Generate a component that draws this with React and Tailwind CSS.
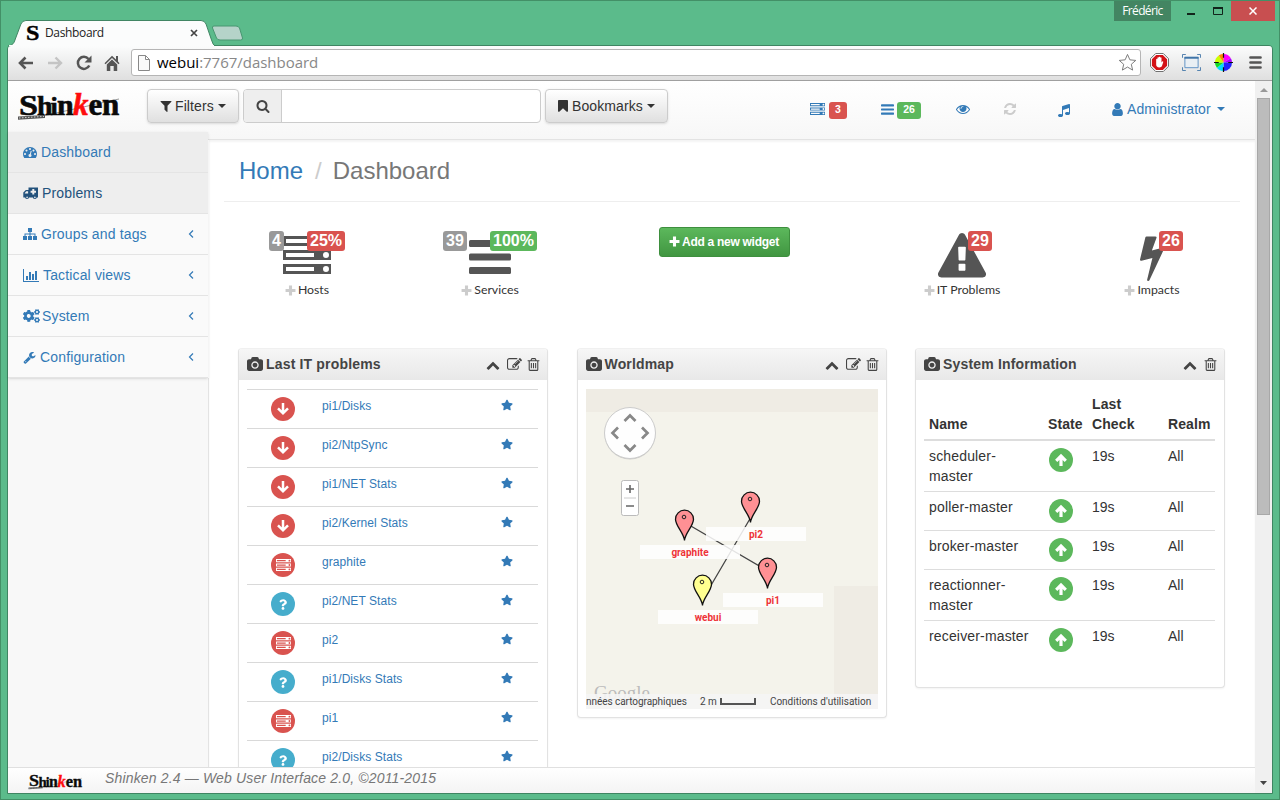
import React from "react";
import { FaCogs, FaQuestion, FaStar } from "react-icons/fa";

function Svg({ box = "0 0 1792 1792", className, children }) {
  return (
    <svg viewBox={box} fill="currentColor" className={"shrink-0 " + className}>
      {children}
    </svg>
  );
}

const paths = {
  filter: "M1595 295q17 41-14 70l-493 493v742q0 42-39 59-13 5-25 5-27 0-45-19l-256-256q-19-19-19-45v-486l-493-493q-31-29-14-70 17-39 59-39h1280q42 0 59 39z",
  search: "M1216 832q0-185-131.5-316.5t-316.5-131.5-316.5 131.5-131.5 316.5 131.5 316.5 316.5 131.5 316.5-131.5 131.5-316.5zm512 832q0 52-38 90t-90 38q-54 0-90-38l-343-342q-179 124-399 124-143 0-273.5-55.5t-225-150-150-225-55.5-273.5 55.5-273.5 150-225 225-150 273.5-55.5 273.5 55.5 225 150 150 225 55.5 273.5q0 220-124 399l343 343q37 37 37 90z",
  bookmark: "M1420 128q23 0 44 9 33 13 52.5 41t19.5 62v1289q0 34-19.5 62t-52.5 41q-19 8-44 8-48 0-83-32l-441-424-441 424q-36 33-83 33-23 0-44-9-33-13-52.5-41t-19.5-62v-1289q0-34 19.5-62t52.5-41q21-9 44-9h1048z",
  eye: "M1664 960q-152-236-381-353 61 104 61 225 0 185-131.5 316.5t-316.5 131.5-316.5-131.5-131.5-316.5q0-121 61-225-229 117-381 353 133 205 333.5 326.5t434.5 121.5 434.5-121.5 333.5-326.5zm-720-384q0-20-14-34t-34-14q-125 0-214.5 89.5t-89.5 214.5q0 20 14 34t34 14 34-14 14-34q0-86 61-147t147-61q20 0 34-14t14-34zm848 384q0 34-20 69-140 230-376.5 368.5t-499.5 138.5-499.5-139-376.5-368q-20-35-20-69t20-69q140-229 376.5-368t499.5-139 499.5 139 376.5 368q20 35 20 69z",
  refresh: "M1639 1056q0 5-1 7-64 268-268 434.5t-478 166.5q-146 0-282.5-55t-243.5-157l-129 129q-19 19-45 19t-45-19-19-45v-448q0-26 19-45t45-19h448q26 0 45 19t19 45-19 45l-137 137q71 66 161 102t187 36q134 0 250-65t186-179q11-17 53-117 8-23 30-23h192q13 0 22.5 9.5t9.5 22.5zm25-800v448q0 26-19 45t-45 19h-448q-26 0-45-19t-19-45 19-45l138-138q-148-137-349-137-134 0-250 65t-186 179q-11 17-53 117-8 23-30 23h-199q-13 0-22.5-9.5t-9.5-22.5v-7q65-268 270-434.5t480-166.5q146 0 284 55.5t245 156.5l130-129q19-19 45-19t45 19 19 45z",
  music: "M1664 224v1120q0 50-34 89t-86 60.5-103.5 32-96.5 10.5-96.5-10.5-103.5-32-86-60.5-34-89 34-89 86-60.5 103.5-32 96.5-10.5q105 0 192 39v-537l-768 237v709q0 50-34 89t-86 60.5-103.5 32-96.5 10.5-96.5-10.5-103.5-32-86-60.5-34-89 34-89 86-60.5 103.5-32 96.5-10.5q105 0 192 39v-967q0-31 19-56.5t49-35.5l832-256q12-4 28-4 40 0 68 28t28 68z",
  user: "M1536 1399q0 109-62.5 187t-150.5 78h-854q-88 0-150.5-78t-62.5-187q0-85 8.5-160.5t31.5-152 58.5-131 94-89 134.5-34.5q131 128 313 128t313-128q76 0 134.5 34.5t94 89 58.5 131 31.5 152 8.5 160.5zm-256-887q0 159-112.5 271.5t-271.5 112.5-271.5-112.5-112.5-271.5 112.5-271.5 271.5-112.5 271.5 112.5 112.5 271.5z",
  wrench: "M448 1472q0-26-19-45t-45-19-45 19-19 45 19 45 45 19 45-19 19-45zm644-420l-682 682q-37 37-90 37-52 0-91-37l-106-108q-38-36-38-90 0-53 38-91l681-681q39 98 114.5 173.5t173.5 114.5zm634-435q0 39-23 106-47 134-164.5 217.5t-258.5 83.5q-185 0-316.5-131.5t-131.5-316.5 131.5-316.5 316.5-131.5q58 0 121.5 16.5t107.5 46.5q16 11 16 28t-16 28l-293 169v224l193 107q5-3 79-48.5t135.5-81 70.5-35.5q15 0 23.5 10t8.5 25z",
  trash: "M704 736v576q0 14-9 23t-23 9h-64q-14 0-23-9t-9-23v-576q0-14 9-23t23-9h64q14 0 23 9t9 23zm256 0v576q0 14-9 23t-23 9h-64q-14 0-23-9t-9-23v-576q0-14 9-23t23-9h64q14 0 23 9t9 23zm256 0v576q0 14-9 23t-23 9h-64q-14 0-23-9t-9-23v-576q0-14 9-23t23-9h64q14 0 23 9t9 23zm128 724v-948h-896v948q0 22 7 40.5t14.5 27 10.5 8.5h832q3 0 10.5-8.5t14.5-27 7-40.5zm-672-1076h448l-48-117q-7-9-17-11h-317q-10 2-17 11zm928 32v64q0 14-9 23t-23 9h-96v948q0 83-47 143.5t-113 60.5h-832q-66 0-113-58.5t-47-141.5v-952h-96q-14 0-23-9t-9-23v-64q0-14 9-23t23-9h309l70-167q15-37 54-63t79-26h320q40 0 79 26t54 63l70 167h309q14 0 23 9t9 23z",
  edit: "M888 1184l116-116-152-152-116 116v56h96v96h56zm440-720q-16-16-33 1l-350 350q-17 17-1 33t33-1l350-350q17-17 1-33zm80 594v190q0 119-84.5 203.5t-203.5 84.5h-832q-119 0-203.5-84.5t-84.5-203.5v-832q0-119 84.5-203.5t203.5-84.5h832q63 0 117 25 15 7 18 23 3 17-9 29l-49 49q-14 14-32 8-23-6-45-6h-832q-66 0-113 47t-47 113v832q0 66 47 113t113 47h832q66 0 113-47t47-113v-126q0-13 9-22l64-64q15-15 35-7t20 29zm-96-738l288 288-672 672h-288v-288zm444 132l-92 92-288-288 92-92q28-28 68-28t68 28l152 152q28 28 28 68t-28 68z",
  camera: "M896 672q119 0 203.5 84.5t84.5 203.5-84.5 203.5-203.5 84.5-203.5-84.5-84.5-203.5 84.5-203.5 203.5-84.5zm704-416q106 0 181 75t75 181v896q0 106-75 181t-181 75h-1408q-106 0-181-75t-75-181v-896q0-106 75-181t181-75h224l51-136q19-49 69.5-84.5t103.5-35.5h512q53 0 103.5 35.5t69.5 84.5l51 136h224zm-704 1152q185 0 316.5-131.5t131.5-316.5-131.5-316.5-316.5-131.5-316.5 131.5-131.5 316.5 131.5 316.5 316.5 131.5z",
  up: "M1683 1331l-166 165q-19 19-45 19t-45-19l-531-531-531 531q-19 19-45 19t-45-19l-166-165q-19-19-19-45.5t19-45.5l742-741q19-19 45-19t45 19l742 741q19 19 19 45.5t-19 45.5z",
  dashboard: "M384 1152q0-53-37.5-90.5t-90.5-37.5-90.5 37.5-37.5 90.5 37.5 90.5 90.5 37.5 90.5-37.5 37.5-90.5zm192-448q0-53-37.5-90.5t-90.5-37.5-90.5 37.5-37.5 90.5 37.5 90.5 90.5 37.5 90.5-37.5 37.5-90.5zm428 481l101-382q6-26-7.5-48.5t-38.5-29.5-48 6.5-30 39.5l-101 382q-60 5-107 43.5t-63 98.5q-20 77 20 146t117 89 146-20 89-117q16-60-6-117t-72-91zm660-33q0-53-37.5-90.5t-90.5-37.5-90.5 37.5-37.5 90.5 37.5 90.5 90.5 37.5 90.5-37.5 37.5-90.5zm-640-640q0-53-37.5-90.5t-90.5-37.5-90.5 37.5-37.5 90.5 37.5 90.5 90.5 37.5 90.5-37.5 37.5-90.5zm448 192q0-53-37.5-90.5t-90.5-37.5-90.5 37.5-37.5 90.5 37.5 90.5 90.5 37.5 90.5-37.5 37.5-90.5zm320 448q0 261-141 483-19 29-54 29h-1402q-35 0-54-29-141-221-141-483 0-182 71-348t191-286 286-191 348-71 348 71 286 191 191 286 71 348z",
  warning: "M1024 1375v-190q0-14-9.5-23.5t-22.5-9.5h-192q-13 0-22.5 9.5t-9.5 23.5v190q0 14 9.5 23.5t22.5 9.5h192q13 0 22.5-9.5t9.5-23.5zm-2-374l18-459q0-12-10-19-13-11-24-11h-220q-11 0-24 11-10 7-10 21l17 457q0 10 10 16.5t24 6.5h185q14 0 23.5-6.5t10.5-16.5zm-14-934l768 1408q35 63-2 126-17 29-46.5 46t-63.5 17h-1536q-34 0-63.5-17t-46.5-46q-37-63-2-126l768-1408q17-31 47-49t65-18 65 18 47 49z",
  bolt: "M1333 566q18 20 7 44l-540 1157q-13 25-42 25-4 0-14-2-17-5-25.5-19t-4.5-30l197-808-406 101q-4 1-12 1-18 0-31-11-18-15-13-39l201-825q4-14 16-23t28-9h328q19 0 32 12.5t13 29.5q0 8-5 18l-171 463 396-98q8-2 12-2 19 0 34 15z",
};

function Icon({ name, box, className }) {
  return (
    <Svg box={box} className={className}>
      <path d={paths[name]} />
    </Svg>
  );
}

function Ambulance({ className }) {
  return (
    <Svg box="0 0 15 13" className={className}>
      <path fillRule="evenodd" d="M5.500 .5H15v10h-1.200a2 2 0 0 1-3.900 0H6a2 2 0 0 1-3.900 0H.3V5.600L2.800 3H5.500zM1.800 6.400h3.300V4.200H3.300L1.800 5.900zM9.300 2h2v1.700H13v2h-1.700v1.700h-2V5.700H7.600v-2h1.700zM3.300 10.400a.8.8 0 1 0 1.600 0a.8.8 0 1 0-1.600 0zM11.100 10.400a.8.8 0 1 0 1.600 0a.8.8 0 1 0-1.600 0z" />
    </Svg>
  );
}

function Server({ className }) {
  const unit = (y) => (
    <path
      key={y}
      fillRule="evenodd"
      d={`M0 ${y}h48v10h-48zM3 ${y + 3}v4h28v-4zM40 ${y + 5}a3 3 0 1 0 6 0a3 3 0 1 0 -6 0z`}
    />
  );
  return (
    <Svg box="0 0 48 38" className={className}>
      {[0, 14, 28].map(unit)}
    </Svg>
  );
}

function Bars({ className }) {
  return (
    <Svg box="0 0 42 34" className={className}>
      <rect width="42" height="7" rx="1.500" />
      <rect y="13.500" width="42" height="7" rx="1.500" />
      <rect y="27" width="42" height="7" rx="1.500" />
    </Svg>
  );
}

function Plus({ className }) {
  return (
    <Svg box="0 0 10 10" className={className}>
      <path d="M3.600 .5h2.800v3.100H9.500v2.800H6.400v3.100H3.600V6.400H.5V3.600h3.100z" />
    </Svg>
  );
}

function Caret({ className }) {
  return (
    <Svg box="0 0 8 4" className={"h-1 w-2 " + className}>
      <path d="M0 0h8L4 4z" />
    </Svg>
  );
}

function Logo({ small }) {
  return (
    <svg viewBox="-1 -3 106 34" className={"shrink-0 overflow-visible " + (small ? "h-[18px] w-[56px]" : "h-[34px] w-[106px]")}>
      <path d="M0 24.500l27-1.600v3l-27 1.800z" fill="#555" />
      <path d="M1 26l25-1.600" stroke="#ddd" strokeWidth=".9" strokeDasharray="1.500 1.500" />
      <path d="M27 23.500L101 7" stroke="#999" strokeWidth="1" />
      <g fontFamily="Liberation Serif, serif" fontWeight="700" fill="#0a0a0a" stroke="#0a0a0a" strokeWidth=".6">
        <text x="1" y="22.500" fontSize="30" textLength="19" lengthAdjust="spacingAndGlyphs">S</text>
        <text x="19" y="23" fontSize="28">h</text>
        <text x="32.500" y="23" fontSize="26">i</text>
        <text x="39" y="23" fontSize="30">n</text>
        <text x="55" y="23" fontSize="31" fontStyle="italic" fill="#ff0d0d" stroke="#ff0d0d">k</text>
        <text x="70.500" y="23" fontSize="31">e</text>
        <text x="84" y="23" fontSize="31">n</text>
      </g>
    </svg>
  );
}

function TitleBar() {
  return (
    <div className="flex h-[45px] shrink-0 items-start justify-between pr-[4px]">
      <div className="flex pt-[20px]">
        <div className="relative ml-[7px] h-[26px] w-[207px]">
          <svg viewBox="0 0 208 26" preserveAspectRatio="none" className="absolute inset-0 h-full w-full">
            <path d="M0 26C5 25 6 23 7 20L13 4Q14.500 .5 18 .5H194Q197.500 .5 199 4L204.500 20Q206 25 208 26z" fill="#fbfcfc" stroke="#3f8562" />
            <path d="M1 26h206" stroke="#fbfcfc" strokeWidth="2" />
          </svg>
          <div className="relative flex h-full items-center pl-[18px] font-['Open_Sans',sans-serif] text-[12px] tracking-[-0.35px] text-[#222]">
            <svg viewBox="0 0 19 20" className="h-[20px] w-[19px] overflow-visible">
              <text x="0" y="16.500" fontFamily="Liberation Serif, serif" fontWeight="700" fontSize="20" textLength="13" lengthAdjust="spacingAndGlyphs" stroke="#000" strokeWidth=".4">S</text>
            </svg>
            <span className="grow">Dashboard</span>
            <svg viewBox="0 0 8 8" className="mr-[17px] h-[8px] w-[8px]"><path d="M1 1l6 6M7 1L1 7" stroke="#444" strokeWidth="1.700" /></svg>
          </div>
        </div>
        <svg viewBox="0 0 32 16" className="mt-[5px] ml-[-4px] h-[16px] w-[32px]">
          <path d="M3 1h22q2.500 0 3.500 2l3 10q.5 2-2 2H9q-2.500 0-3.500-2l-4-10q-.5-2 1.500-2z" fill="#b5d3c9" stroke="#489670" />
        </svg>
      </div>
      <div className="flex items-start pt-px">
        <div className="flex h-[20px] w-[57px] items-center justify-center bg-[#438562] font-['Open_Sans',sans-serif] text-[12px] tracking-[-0.65px] text-white">Frédéric</div>
        <svg viewBox="0 0 60 20" className="h-[20px] w-[60px]">
          <path d="M16 12h8v2h-8z" fill="#12241b" />
          <path d="M42.500 6.500h9v7h-9z" fill="none" stroke="#12241b" />
          <path d="M42 6h10v2h-10z" fill="#12241b" />
        </svg>
        <div className="flex h-[20px] w-[44px] items-center justify-center bg-[#c84f50]">
          <svg viewBox="0 0 8 8" className="h-[8px] w-[8px]"><path d="M.5 .5l7 7M7.500 .5l-7 7" stroke="#fff" strokeWidth="1.500" /></svg>
        </div>
      </div>
    </div>
  );
}

function Toolbar() {
  return (
    <div className="flex h-[35px] shrink-0 items-center rounded-t-[3px] border-b border-[#a0a0a0] bg-linear-to-b from-[#fbfcfc] to-[#dfdfdf] pb-px pl-[10px]">
      <svg viewBox="0 0 16 14" className="h-[14px] w-[16px]"><path d="M15 7H2.500M7.500 1.500L2 7l5.500 5.500" fill="none" stroke="#555" strokeWidth="2.600" /></svg>
      <svg viewBox="0 0 16 14" className="ml-[13px] h-[14px] w-[16px]"><path d="M1 7h12.500M8.500 1.500L14 7l-5.500 5.500" fill="none" stroke="#c4c4c4" strokeWidth="2.400" /></svg>
      <svg viewBox="0 0 16 16" className="ml-[13px] h-[16px] w-[16px]">
        <path d="M13.300 10.500A6 6 0 1 1 12.500 4" fill="none" stroke="#555" strokeWidth="2.500" />
        <path d="M15.500 .5v7h-7z" fill="#555" />
      </svg>
      <svg viewBox="0 0 16 16" className="ml-[12px] h-[16px] w-[16px]">
        <path d="M8 .8L.5 8.300l1 1L8 3l6.500 6.300 1-1L14 6.500V1h-2v3.600zM2.800 9.500L8 4.500l5.200 5V16H9.700v-5H6.300v5H2.800z" fill="#555" />
      </svg>
      <div className="ml-[11px] flex h-[27px] w-[1010px] items-center rounded-[3px] border border-[#b5b5b5] bg-white px-[6px]">
        <svg viewBox="0 0 12 16" className="h-[16px] w-[12px]"><path d="M.5 .5h7l4 4v11H.5zM7.500 .5v4h4" fill="#fafafa" stroke="#888" /></svg>
        <div className="ml-[7px] grow pb-px font-['Open_Sans',sans-serif] text-[15px] leading-[24px] tracking-[-0.02px] text-[#888]"><span className="text-black">webui</span>:7767/dashboard</div>
        <svg viewBox="0 0 20 20" className="mr-[-3px] h-[19px] w-[19px]"><path d="M10 1.500l2.500 5.700 6.200.6-4.700 4.100 1.400 6.100L10 14.800 4.600 18 6 11.900 1.300 7.800l6.200-.6z" fill="#fff" stroke="#777" /></svg>
      </div>
      <svg viewBox="0 0 20 20" className="ml-[9px] h-[19px] w-[19px]">
        <path d="M6 .5h8L19.500 6v8L14 19.500H6L.5 14V6z" fill="#fff" stroke="#666" />
        <path d="M6.500 2h7L18 6.500v7L13.500 18h-7L2 13.500v-7z" fill="#d31217" />
        <path d="M6.500 10V6.500q.7-.8 1.300 0V5q.7-.9 1.400 0V4.300q.7-.9 1.500 0V5q.8-.8 1.400 0v5l1-1.200q1.200 0 .8 1L12.500 14q-.6 1.200-2.500 1.200c-2.500 0-3.500-1.200-3.500-3z" fill="#fff" />
      </svg>
      <svg viewBox="0 0 20 18" className="ml-[13px] h-[17px] w-[19px]" fill="none">
        <path d="M.5 4V.5H4M16 .5h3.500V4M.5 14v3.500H4M16 17.500h3.500V14" stroke="#4a7bab" />
        <path d="M3 3.500h14v11H3z" stroke="#5b8fc4" fill="#e9eff4" /><path d="M2.500 4h15" stroke="#3f74a8" strokeWidth="2" />
      </svg>
      <svg viewBox="-10 -10 20 20" className="ml-[13px] h-[19px] w-[19px]">
        <path d="M0 0L0-9A9 9 0 0 1 7.800-4.500z" fill="#f0f" />
        <path d="M0 0L7.800-4.500A9 9 0 0 1 9 0z" fill="#a0f" />
        <path d="M0 0H9A9 9 0 0 1 0 9z" fill="#22f" />
        <path d="M0 0V9A9 9 0 0 1-7 5.600z" fill="#0df" />
        <path d="M0 0L-7 5.600A9 9 0 0 1-9 0z" fill="#1d2" />
        <path d="M0 0H-9A9 9 0 0 1-5-7.500z" fill="#cf0" />
        <path d="M0 0L-5-7.500A9 9 0 0 1 0-9z" fill="#f80" />
        <path d="M0-10V-5M0 10V5M-10 0H-5M10 0H5" stroke="#111" strokeWidth="1.300" />
      </svg>
      <svg viewBox="0 0 13 13" className="ml-[16px] h-[13px] w-[13px]"><path d="M1.500 1.500h10M1.500 6.500h10M1.500 11.500h10" stroke="#555" strokeWidth="2.700" strokeLinecap="round" /></svg>
    </div>
  );
}

function Navbar() {
  const button = "flex h-[34px] items-center rounded-[4px] border border-[#ccc] bg-linear-to-b from-white to-[#e0e0e0] shadow-sm text-[#333] ";
  return (
    <header className="flex h-[59px] shrink-0 items-start border-b border-[#e3e3e3] bg-linear-to-b from-white to-[#f7f7f7] pt-[8px] pl-[9px] text-[14px]">
      <Logo />
      <div className={button + "ml-[24px] w-[92px] pl-[11px]"}>
        <Icon name="filter" className="h-[14px] w-[14px]" />
        <span className="ml-[2px] tracking-[0.1px]">Filters</span>
        <Caret className="ml-[4px]" />
      </div>
      <div className="ml-[4px] flex h-[34px] w-[298px] overflow-hidden rounded-[4px] border border-[#ccc] bg-white">
        <div className="flex w-[38px] items-center justify-center border-r border-[#ccc] bg-[#eee] text-[#444]">
          <Icon name="search" className="h-[14px] w-[14px]" />
        </div>
      </div>
      <div className={button + "ml-[4px] w-[123px] pl-[10px]"}>
        <Icon name="bookmark" className="h-[14px] w-[14px]" />
        <span className="ml-[2px] tracking-[0.1px]">Bookmarks</span>
        <Caret className="ml-[4px]" />
      </div>
      <nav className="ml-[142px] flex h-[40px] items-center text-[#337ab7]">
        <Server className="h-[12px] w-[15px]" />
        <span className="mt-[2px] ml-[4px] flex h-[17px] w-[18px] items-center justify-center rounded-[3px] bg-[#d9534f] text-[10.500px] font-bold text-white">3</span>
        <Bars className="ml-[34px] h-[11px] w-[13px]" />
        <span className="mt-[2px] ml-[3px] flex h-[17px] w-[24px] items-center justify-center rounded-[3px] bg-[#5cb85c] text-[10.500px] font-bold text-white">26</span>
        <Icon name="eye" className="ml-[35px] h-[14px] w-[14px]" />
        <Icon name="refresh" className="ml-[33px] h-[14px] w-[14px] text-[#ccc]" />
        <Icon name="music" className="mt-px ml-[40px] h-[14px] w-[14px]" />
        <Icon name="user" className="ml-[39px] h-[15px] w-[15px]" />
        <span className="ml-[2px] tracking-[0.1px]">Administrator</span>
        <Caret className="ml-[6px]" />
      </nav>
    </header>
  );
}

const menu = [
  { label: "Dashboard", icon: <Icon name="dashboard" className="h-[14px] w-[14px]" />, tone: "bg-[#ededed] text-[#337ab7]" },
  { label: "Problems", icon: <Ambulance className="h-[13px] w-[15px]" />, tone: "bg-[#eee] text-[#23527c]" },
  {
    label: "Groups and tags",
    icon: <Svg box="0 0 14 14" className="h-[14px] w-[14px]"><path d="M5 1h4v4H7.500v1.500H12.500V9H14v4h-4V9h1.500V7.500h-4V9H9v4H5V9h1.500V7.500h-4V9H4v4H0V9h1.500V6.500h5V5H5z" /></Svg>,
    tone: "bg-[#fafafa] text-[#337ab7]", more: true,
  },
  {
    label: "Tactical views",
    icon: <Svg box="0 0 16 13" className="h-[13px] w-[16px]"><path d="M0 0h1v12h15v1H0zM3 7h2v4H3zM6 3h2v8H6zM9 5h2v6H9zM12 2h2v9h-2z" /></Svg>,
    tone: "bg-[#fafafa] text-[#337ab7]", more: true,
  },
  { label: "System", icon: <FaCogs className="mr-[-2px] h-[14px] w-[17px] shrink-0" />, tone: "bg-[#fafafa] text-[#337ab7]", more: true },
  { label: "Configuration", icon: <Icon name="wrench" className="h-[13px] w-[13px]" />, tone: "bg-[#fafafa] text-[#337ab7]", more: true },
];

function Sidebar() {
  return (
    <aside className="relative z-10 mt-[-8px] flex w-[201px] shrink-0 flex-col">
      <div className="z-10 flex w-[200px] flex-col shadow-sm">
        {menu.map((m) => (
          <a key={m.label} className={"flex h-[41px] items-center border-b border-[#e4e4e4] pl-[15px] text-[14px] " + m.tone}>
            {m.icon}
            <span className="ml-[4px] grow tracking-[0.15px]">{m.label}</span>
            {m.more && (
              <svg viewBox="0 0 6 8" className="mr-[14px] h-[8px] w-[6px]"><path d="M5 .5L1.500 4 5 7.500" fill="none" stroke="currentColor" strokeWidth="1.200" /></svg>
            )}
          </a>
        ))}
      </div>
      <div className="grow border-r border-[#e3e3e3] bg-[#f8f8f8]" />
    </aside>
  );
}

function Stat({ icon, label, left, right }) {
  return (
    <div className="flex flex-col items-center">
      <div className="relative flex h-[50px] w-[60px] items-center justify-center text-[#555]">
        {icon}
        {left}
        {right}
      </div>
      <div className="flex items-center font-[Lato,sans-serif] text-[12.300px] leading-[18px] text-[#333]">
        <Plus className="mr-[2px] h-[11px] w-[11px] text-[#ccc]" />
        {label}
      </div>
    </div>
  );
}

const tag = "absolute flex h-[20px] items-center justify-center rounded-[3px] text-[16px] font-bold text-white ";

function Stats() {
  return (
    <section className="grid h-[105px] grid-cols-[166px_200px_269px_206px_174px]">
      <Stat
        label="Hosts"
        icon={<Server className="mt-[-3px] h-[38px] w-[48px]" />}
        left={<span className={tag + "top-0 left-[-8px] w-[15px] bg-[#999]"}>4</span>}
        right={<span className={tag + "top-0 left-[30px] w-[38px] bg-[#d9534f]"}>25%</span>}
      />
      <Stat
        label="Services"
        icon={<Bars className="mt-[2px] h-[34px] w-[42px]" />}
        left={<span className={tag + "top-0 left-[-17px] w-[24px] bg-[#999]"}>39</span>}
        right={<span className={tag + "top-0 left-[30px] w-[47px] bg-[#5cb85c]"}>100%</span>}
      />
      <div className="flex items-start justify-center">
        <button className="mt-[-4px] flex h-[30px] w-[131px] items-center rounded-[3px] border border-[#3e8f3e] bg-linear-to-b from-[#5cb85c] to-[#419641] pb-px pl-[9px] text-[12px] font-bold text-white">
          <Plus className="mr-[2px] h-[11px] w-[11px]" />
          <span className="tracking-[-0.28px]">Add a new widget</span>
        </button>
      </div>
      <Stat
        label="IT Problems"
        icon={<Icon name="warning" className="mt-[2px] h-[48px] w-[48px]" />}
        right={<span className={tag + "top-0 left-[36px] w-[24px] bg-[#d9534f]"}>29</span>}
      />
      <Stat
        label="Impacts"
        icon={<Icon name="bolt" className="mt-[2px] h-[48px] w-[48px]" />}
        right={<span className={tag + "top-0 left-[37px] w-[24px] bg-[#d9534f]"}>26</span>}
      />
    </section>
  );
}

function Panel({ title, editable, className, children }) {
  return (
    <section className={"rounded-[4px] border border-[#e2e2e2] border-t-[#f0f0f0] bg-white shadow-xs " + className}>
      <div className="flex h-[31px] items-center rounded-t-[3px] bg-linear-to-b from-[#f6f6f6] to-[#e8e8e8] pr-[6px] pl-[8px] text-[#444]">
        <Icon name="camera" box="-64 0 1920 1792" className="h-[15px] w-[16px]" />
        <h3 className="ml-[3px] grow text-[14px] font-bold tracking-[0.17px] text-[#444]">{title}</h3>
        <Icon name="up" className="h-[14px] w-[14px]" />
        {editable && <Icon name="edit" className="ml-[7px] h-[15px] w-[15px]" />}
        <Icon name="trash" className={(editable ? "ml-[4px]" : "ml-[6px]") + " h-[15px] w-[15px]"} />
      </div>
      {children}
    </section>
  );
}

const problems = [
  ["down", "pi1/Disks"], ["down", "pi2/NtpSync"], ["down", "pi1/NET Stats"], ["down", "pi2/Kernel Stats"],
  ["host", "graphite"], ["unknown", "pi2/NET Stats"], ["host", "pi2"], ["unknown", "pi1/Disks Stats"],
  ["host", "pi1"], ["unknown", "pi2/Disks Stats"],
];

function StateDot({ kind }) {
  const base = "flex h-[24px] w-[24px] items-center justify-center rounded-full text-white ";
  if (kind === "down") {
    return (
      <span className={base + "bg-[#d9534f]"}>
        <svg viewBox="0 0 14 14" className="h-[14px] w-[14px]"><path d="M7 1v9.500M2 6.300l5 5 5-5" fill="none" stroke="currentColor" strokeWidth="2.500" /></svg>
      </span>
    );
  }
  if (kind === "up") {
    return (
      <span className={base + "bg-[#5cb85c]"}>
        <svg viewBox="0 0 14 14" className="h-[14px] w-[14px]"><path d="M7 13V4M2.200 7.800L7 3l4.800 4.800" fill="none" stroke="currentColor" strokeWidth="3.200" /></svg>
      </span>
    );
  }
  if (kind === "host") return <span className={base + "bg-[#d9534f]"}><Server className="h-[12px] w-[15px]" /></span>;
  return <span className={base + "bg-[#46adcc]"}><FaQuestion className="h-[11px] w-[8px]" /></span>;
}

function ProblemsPanel() {
  return (
    <Panel title="Last IT problems" editable className="h-[460px]">
      <ul className="pt-[9px] pr-[9px] pl-[8px]">
        {problems.map(([kind, name]) => (
          <li key={name} className="flex h-[39px] items-start border-t border-[#d9d9d9] pt-[7px] pl-[24px]">
            <StateDot kind={kind} />
            <a className="ml-[27px] grow pt-[1px] text-[12px] leading-[16px] tracking-[0.07px] text-[#337ab7]">{name}</a>
            <FaStar className="mt-[2px] mr-[25px] h-[12px] w-[12px] text-[#337ab7]" />
          </li>
        ))}
      </ul>
    </Panel>
  );
}

const pins = [
  { name: "pi2", at: "left-[154px] top-[102px]", label: "left-[120px] top-[138px]", fill: "#ff9094" },
  { name: "graphite", at: "left-[88px] top-[120px]", label: "left-[54px] top-[156px]", fill: "#ff9094" },
  { name: "pi1", at: "left-[171px] top-[168px]", label: "left-[137px] top-[204px]", fill: "#ff9094" },
  { name: "webui", at: "left-[106px] top-[185px]", label: "left-[72px] top-[221px]", fill: "#ffff90" },
];

function MapPanel() {
  return (
    <Panel title="Worldmap" editable className="h-[370px]">
      <div className="relative mt-[9px] mr-[7.5px] ml-[8.5px] h-[320px] overflow-hidden bg-[#f4f3eb] font-[Roboto,sans-serif]">
        <svg viewBox="0 0 292 320" className="absolute inset-0 h-[320px] w-[292px]">
          <path d="M0 0h292v23H0zM248 197h44v123h-44z" fill="#efece4" />
          <path d="M98 133L182 182M165 128L117 210" stroke="#444" strokeWidth="1.300" />
        </svg>
        <svg viewBox="-26 -26 54 56" className="absolute top-[17px] left-[17px] h-[56px] w-[54px]">
          <circle cy="2" cx="1" r="25.500" fill="#aaa" opacity=".5" />
          <circle r="25.500" cx="1" cy="1" fill="#fefefe" stroke="#ccc" />
          <path d="M-4.500-11l5.500-5.500 5.500 5.500M-4.500 13l5.500 5.500 5.500-5.500M-11-4.500l-5.500 5.500 5.500 5.500M13-4.500l5.500 5.500-5.500 5.500" fill="none" stroke="#888" strokeWidth="2.700" />
        </svg>
        <svg viewBox="0 0 18 36" className="absolute top-[91px] left-[35px] h-[36px] w-[18px]">
          <rect x=".5" y=".5" width="17" height="35" rx="2" fill="#fff" stroke="#bbb" />
          <path d="M3 18h12" stroke="#ccc" />
          <path d="M5 9h8M9 5v8M5 26h8" stroke="#666" strokeWidth="1.600" />
        </svg>
        {pins.map((p) => (
          <React.Fragment key={p.name}>
            <div className={"absolute flex h-[14px] w-[100px] items-center justify-center bg-white/85 text-[10px] font-bold text-[#ee3338] " + p.label}>{p.name}</div>
            <svg viewBox="0 0 21 34" className={"absolute h-[34px] w-[21px] " + p.at}>
              <path d="M10.500 31.500C10 24 1.500 17 1.500 10.200a9 9 0 0 1 18 0C19.500 17 11 24 10.500 31.500z" fill={p.fill} stroke="#111" strokeWidth="1.300" />
              <circle cx="10" cy="8" r="1.800" fill="none" stroke="#222" />
            </svg>
          </React.Fragment>
        ))}
        <div className="absolute bottom-[5px] left-[8px] font-['Liberation_Serif',serif] text-[19px] leading-[22px] text-[#bbb]">Google</div>
        <div className="absolute bottom-0 left-0 flex h-[15px] w-full items-center bg-[#f5f5f5]/90 text-[10px] whitespace-nowrap text-[#444]">
          <span className="w-[114px] tracking-[-0.05px]">nnées cartographiques</span>
          <span>2 m</span>
          <svg viewBox="0 0 36 7" className="ml-[3px] h-[7px] w-[36px]"><path d="M1 0v6h34V0" fill="none" stroke="#555" strokeWidth="2" /></svg>
          <span className="ml-[14px]">Conditions d'utilisation</span>
        </div>
      </div>
    </Panel>
  );
}

const daemons = [
  ["scheduler-master", "h-[51px]"], ["poller-master", "h-[39px]"], ["broker-master", "h-[39px]"],
  ["reactionner-master", "h-[51px]"], ["receiver-master", "h-[39px]"],
];

function SystemPanel() {
  const cols = "grid grid-cols-[119px_44px_76px_1fr] pl-[5px] ";
  return (
    <Panel title="System Information" className="h-[340px]">
      <div className="pt-[9px] pr-[9px] pl-[8px] text-[14px] leading-[20px] text-[#333]">
        <div className={cols + "h-[52px] items-end border-b-2 border-[#ddd] pb-[5px] font-bold tracking-[0.1px]"}>
          <span>Name</span><span>State</span><span className="w-[50px]">Last Check</span><span>Realm</span>
        </div>
        {daemons.map(([name, h], i) => (
          <div key={name} className={cols + "items-start pt-[5px] " + h + (i < 4 ? " border-b border-[#ddd]" : "")}>
            <span className="w-[104px] tracking-[0.16px]">{name}</span>
            <span className="pt-[2px] pl-px"><StateDot kind="up" /></span>
            <span>19s</span><span>All</span>
          </div>
        ))}
      </div>
    </Panel>
  );
}

function Scrollbar() {
  return (
    <div className="flex w-[17px] shrink-0 flex-col items-center bg-[#f0f0f0]">
      <svg viewBox="0 0 17 17" className="h-[17px] w-[17px]"><path d="M5 11l4-4 4 4z" fill="#999" /></svg>
      <div className="h-[417px] w-[13px] border border-[#a8a8a8] bg-[#bcbcbc]" />
      <div className="grow" />
      <svg viewBox="0 0 17 17" className="mb-[2px] h-[17px] w-[17px]"><path d="M5 7h7l-3.500 4z" fill="#444" /></svg>
    </div>
  );
}

export default function App() {
  return (
    <div className="flex h-[800px] w-[1280px] flex-col overflow-hidden border border-[#439067] bg-[#5bbb8b] font-['Liberation_Sans',Arial,sans-serif]">
      <div className="-mt-px flex grow flex-col">
        <TitleBar />
        <div className="mx-[6px] flex h-[749px] shrink-0 flex-col rounded-t-[4px] border border-[#3f8562]">
          <Toolbar />
          <div className="flex min-h-0 grow bg-white">
            <div className="flex w-[1248px] flex-col">
              <Navbar />
              <div className="flex min-h-0 grow">
                <Sidebar />
                <main className="flex grow flex-col overflow-hidden px-[15px] shadow-[inset_0_2px_2px_#f4f4f4]">
                  <h1 className="flex h-[62px] shrink-0 items-center border-b border-[#eee] pl-[15px] text-[24px] text-[#777]">
                    <span className="text-[#337ab7]">Home</span>
                    <span className="mr-[11px] ml-[12px] text-[#ccc]">/</span>
                    <span>Dashboard</span>
                  </h1>
                  <div className="mt-[29px] h-[117px] shrink-0"><Stats /></div>
                  <div className="grid grid-cols-[310px_310px_310px] items-start gap-[28.5px] pl-[14px]">
                    <ProblemsPanel />
                    <MapPanel />
                    <SystemPanel />
                  </div>
                </main>
              </div>
              <footer className="z-20 flex h-[26px] shrink-0 items-start border-t border-[#e0e0e0] bg-linear-to-b from-white to-[#f4f4f4] pl-[20px] text-[14px] text-[#777] italic">
                <div className="mt-[5px] flex not-italic"><Logo small /></div>
                <span className="ml-[21px] leading-[20px] tracking-[0.16px]">Shinken 2.4 — Web User Interface 2.0, ©2011-2015</span>
              </footer>
            </div>
            <Scrollbar />
          </div>
        </div>
      </div>
    </div>
  );
}
